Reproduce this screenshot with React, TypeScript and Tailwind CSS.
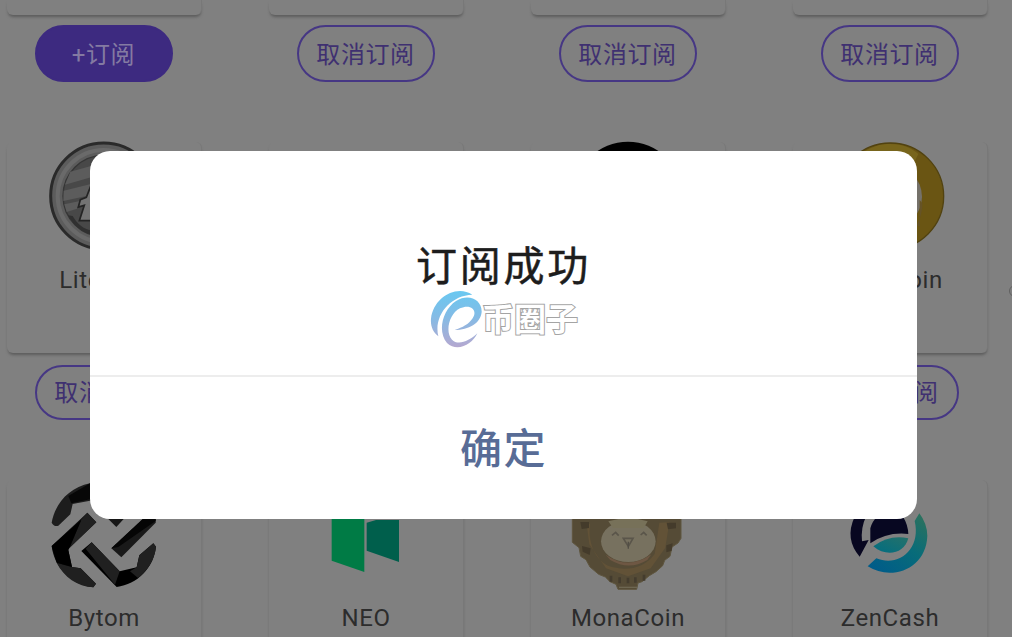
import type { ReactNode } from "react";

function Icon({ viewBox, children }: { viewBox: string; children?: ReactNode }) {
  return (
    <svg viewBox={viewBox} className="h-[110px] w-[121px] shrink-0 overflow-visible">
      {children}
    </svg>
  );
}

const litecoin = (
  <Icon viewBox="132 36 363 330">
    <circle cx="311" cy="198" r="159" fill="#5c5c5c" stroke="#2a2a2a" strokeWidth="9" />
    <circle cx="311" cy="198" r="138" fill="none" stroke="#6a6a6a" strokeWidth="12" />
    <circle cx="311" cy="198" r="122" fill="#484848" stroke="#363636" strokeWidth="4" />
    <path d="M211 125l62-17v34l-78 22zM191 182l82-20v33l-83 18zM193 223l47-10-9 23-31 10z" fill="#5c5c5c" />
    <path d="M204 256c18 32 38 49 70 58l4-12c-27-4-45-18-60-44z" fill="#303030" />
    <path d="M273 166l-14 36-18 7-6 22 18-5-15 46h80v-20h-37l20-84z" fill="#747474" stroke="#242424" strokeWidth="5" />
  </Icon>
);

const blackCoin = (
  <Icon viewBox="84 426 363 330">
    <circle cx="264" cy="587" r="162" fill="#000" />
  </Icon>
);

const dogecoin = (
  <Icon viewBox="-90 36 363 330">
    <circle cx="91" cy="199" r="160" fill="#6a5513" stroke="#514210" strokeWidth="4" />
    <path d="M0 76C30 48 64 42 91 42c40 0 66 14 84 30l-10 20C120 60 60 58 0 76z" fill="#78651c" />
    <circle cx="91" cy="200" r="95" fill="#75716a" />
    <path d="M170 286c12-22 18-48 17-66l-8-10v80z" fill="#665326" />
  </Icon>
);

const bytom = (
  <Icon viewBox="132 30 363 330">
    <path d="M155 158C164 104 206 52 270 40h60v52h-60l-52 10-7 31-36 34q-12 5-20-9z" fill="#1d1d1d" />
    <path d="M205 78L270 40v48l-56 12z" fill="#070707" />
    <path d="M155 228L262 128l27 29-85 80 12 54 26 4 46 46-8 11C215 345 162 292 155 228z" fill="#101010" />
    <path d="M262 128l27 29-81 78 36-86zM170 278l46 13 26 4 46 46-8 11c-48-2-88-31-110-74z" fill="#202020" />
    <path d="M155 228l89-79-36 86-3 5 11 51-46-13z" fill="#000" />
    <path d="M244 243l31-26 84 87 51-12 8-36 42-36 8 10c-8 64-55 112-118 121z" fill="#000" />
    <path d="M275 217l84 87-14 40-88-108zM410 292l8-36 42-36 8 10c-4 40-26 73-54 94l-24-20z" fill="#202020" />
    <path d="M334 235l104-97h29v20L364 262z" fill="#191919" />
    <path d="M334 235l104-97h29v15l-112 78z" fill="#050505" />
    <path d="M325 147h46l-22 24z" fill="#161616" />
  </Icon>
);

const neo = (
  <Icon viewBox="138 -60 363 330">
    <path d="M215 40l98 12v164l-98-34z" fill="#007b45" />
    <path d="M320 68l28-8h69v126l-97-34z" fill="#005f4c" />
  </Icon>
);

const monacoin = (
  <Icon viewBox="84 -60 363 330">
    <path
      d="M103 50h320v65l-9 14-18 12-6 28-16 12-6 16-20 18-20 12-22 18-12 4-4 19h-56l-6-15-18-8-14-14-20-8-26-22-12-22-16-10-5-26-20-16V50z"
      fill="#554b36"
      stroke="#5f563f"
      strokeWidth="3"
    />
    <path d="M150 72c-8 64 22 120 70 130 45 12 96 0 124-40l14-94 30-1-12 76-44 62-68 24-66-24-50-72-9-66z" fill="#625237" />
    <path d="M121 66h26v18l-22 3zM380 68h28v17l-24 3zM126 138l26 7-3 20-21-10zM379 136l19-6-3 22-16 5z" fill="#443b2b" />
    <ellipse cx="265" cy="124" rx="82" ry="62" fill="#77715f" />
    <path d="M205 64q60-19 118 0l-12 20h-92z" fill="#777159" />
    <path d="M197 164q68 48 137-1l-12 17q-55 33-111 0z" fill="#6e5743" />
    <path d="M216 106l11-9 9 10M302 105l9-8 9 9M250 115h29l-14 24z" fill="none" stroke="#5a554a" strokeWidth="5" />
    <path d="M265 125v21" stroke="#524e45" strokeWidth="4" />
    <path d="M213 227v18M239 232v18M264 233v17M286 232v16M312 224v18" stroke="#443c2e" strokeWidth="8" />
    <path d="M237 262h54" stroke="#6d6651" strokeWidth="4" />
  </Icon>
);

const zencash = (
  <Icon viewBox="120 30 363 330">
    <defs>
      <linearGradient id="zenRing" x1="1" y1="0" x2="0.2" y2="1">
        <stop offset="0" stopColor="#31725a" />
        <stop offset="0.5" stopColor="#086c79" />
        <stop offset="1" stopColor="#005c89" />
      </linearGradient>
      <linearGradient id="zenLeaf" x1="1" y1="0" x2="0" y2="1">
        <stop offset="0" stopColor="#25716a" />
        <stop offset="1" stopColor="#006d82" />
      </linearGradient>
    </defs>
    <path d="M194 140h34q-16 32-12 74l20-4-27 50q-46-54-15-120z" fill="#080720" />
    <path d="M241 205V175q4-19 20-35h78q15 24 16 52-64-7-114 28z" fill="#070721" />
    <path d="M250 229q48-36 105-24c-12 46-66 58-105 24z" fill="url(#zenLeaf)" />
    <path d="M388 130q23 30 24 67c-3 100-108 138-179 92l26-24c67 28 135-28 115-112z" fill="url(#zenRing)" />
  </Icon>
);

function SubscribeButton({ subscribed = true, short = false }: { subscribed?: boolean; short?: boolean }) {
  return (
    <button
      className={`mr-[2px] flex w-[138px] items-center justify-center rounded-full border-[2.5px] text-[24px] tracking-[0.6px] ${
        short ? "h-[55px] pt-0" : "h-[57px] pt-[3px]"
      } ${subscribed ? "border-[#463784] text-[#3f3071]" : "border-[#3d2a80] bg-[#3d2a80] text-[#847aa2]"}`}
    >
      {subscribed ? "取消订阅" : "+订阅"}
    </button>
  );
}

function CoinCard({ icon, name }: { icon?: ReactNode; name?: string }) {
  return (
    <div className="flex h-[211px] flex-col items-center rounded-md border-r border-[#787878] bg-[#808080] shadow-[0_3px_3px_-1px_#5c5c5c]">
      {icon ?? <div className="h-[110px]" />}
      <div className="mt-[12px] h-8 font-[Roboto] text-[24px] leading-8 tracking-[0.6px] text-[#2c2c2c]">{name}</div>
    </div>
  );
}

const columns = "grid grid-cols-[repeat(4,195px)] gap-x-[67px] px-[7px]";

export default function App() {
  return (
    <div className="relative h-[637px] w-[1012px] overflow-hidden bg-[#808080] font-['Roboto','Noto_Sans_CJK_SC',sans-serif]">
      <div className={columns}>
        {[false, true, true, true].map((subscribed, i) => (
          <div key={i} className="flex flex-col items-center">
            <div className="h-[15px] w-full rounded-b-md border-r border-[#787878] bg-[#808080] shadow-[0_3px_3px_-1px_#5c5c5c]" />
            <div className="mt-[10px]">
              <SubscribeButton subscribed={subscribed} />
            </div>
          </div>
        ))}
      </div>

      <div className={`${columns} mt-[60px]`}>
        <CoinCard icon={litecoin} name="Litecoin" />
        <CoinCard />
        <CoinCard icon={blackCoin} />
        <CoinCard icon={dogecoin} name="Dogecoin" />
      </div>

      <div className={`${columns} mt-[12px] justify-items-center`}>
        {[0, 1, 2, 3].map((i) => (
          <SubscribeButton key={i} short />
        ))}
      </div>

      <div className={`${columns} mt-[60px]`}>
        <CoinCard icon={bytom} name="Bytom" />
        <CoinCard icon={neo} name="NEO" />
        <CoinCard icon={monacoin} name="MonaCoin" />
        <CoinCard icon={zencash} name="ZenCash" />
      </div>

      <div className="absolute top-[285px] left-[1009px] size-3 rounded-full border border-[#606060]" />

      <div className="absolute top-[151px] left-[90px] flex h-[368px] w-[827px] flex-col rounded-[20px] bg-white">
        <div className="flex h-[226px] flex-col items-center border-b-2 border-[#ededed] pt-[86px]">
          <div className="h-[60px] text-[41px] leading-[60px] tracking-[2.8px] text-[#1d1d1d] [-webkit-text-stroke:0.5px_#1d1d1d]">
            订阅成功
          </div>
        </div>
        <button className="flex flex-1 items-center justify-center pt-[2px] text-[42px] font-medium tracking-[1.5px] text-[#586c96]">
          确定
        </button>
      </div>

      <div className="absolute top-[289px] left-[430px] flex h-[60px] items-center">
        <svg viewBox="12 15 156 180" className="h-[60px] w-[52px]">
          <defs>
            <linearGradient id="mark" x1="0" y1="18" x2="0" y2="190" gradientUnits="userSpaceOnUse">
              <stop offset="0" stopColor="#69c9f1" />
              <stop offset="0.45" stopColor="#82bce6" />
              <stop offset="1" stopColor="#b5a8d0" />
            </linearGradient>
          </defs>
          <path d="M139 32C92 0 22 40 15 104c-2 22 6 42 22 53C22 96 72 34 139 32z" fill="url(#mark)" />
          <path
            d="M167 84C168 47 128 27 90 51 50 77 33 142 63 177c31 30 77 3 91-29-24 24-59 37-76 19-22-24-8-78 24-94 32-15 54 6 38 30-12 18-30 27-54 35 42 0 78-20 81-54z"
            fill="url(#mark)"
          />
        </svg>
        <div className="mb-[5px] font-['Noto_Sans_CJK_SC',sans-serif] text-[32px] leading-[60px] font-bold text-white [-webkit-text-stroke:2px_#a4a4a4] [paint-order:stroke_fill]">
          币圈子
        </div>
      </div>
    </div>
  );
}
